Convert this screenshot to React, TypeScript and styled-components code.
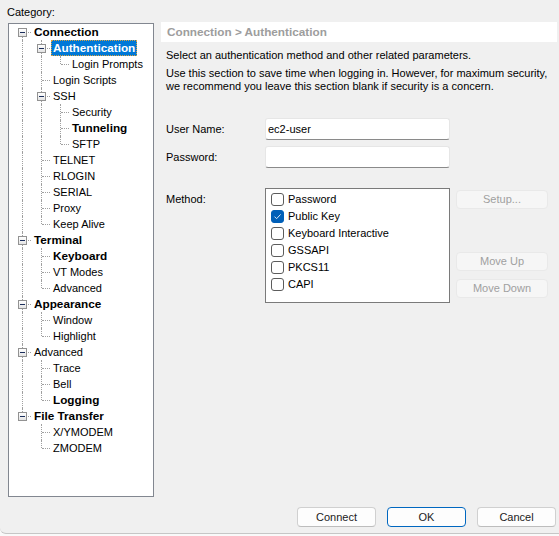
import * as React from "react";
import styled, { createGlobalStyle, css } from "styled-components";

const GlobalStyle = createGlobalStyle`
  html, body {
    margin: 0;
    background: #f9f9f9;
  }
  body {
    font-family: "Liberation Sans", Arial, sans-serif;
    font-size: 11px;
    color: #000;
  }
`;

const Window = styled.div`
  width: 559px;
  height: 534px;
  box-sizing: border-box;
  background: #f0f0f0;
  border-bottom: 1px solid #c6c6c6;
  border-bottom-left-radius: 6px;
  display: flex;
  flex-direction: column;
`;

const Body = styled.div`
  display: flex;
  padding-top: 5px;
`;

const LeftColumn = styled.div`
  margin-left: 7px;
  width: 147px;
  display: flex;
  flex-direction: column;
`;

const Caption = styled.div`
  height: 14px;
  line-height: 14px;
`;

const TreeBox = styled.div`
  margin: 4px 0 0 1px;
  width: 146px;
  height: 474px;
  box-sizing: border-box;
  border: 1px solid #828790;
  background: #fff;
  padding-left: 3px;
`;

const TreeRow = styled.div`
  display: flex;
  height: 16px;
`;

const dots = "1px dotted #a0a0a0";

const Guide = styled.div<{ $up?: boolean; $down?: boolean; $across?: boolean }>`
  position: relative;
  width: 19px;
  flex: none;
  &::before {
    content: "";
    position: absolute;
    left: 10px;
    top: ${p => (p.$up ? "0" : "8px")};
    bottom: ${p => (p.$down ? "0" : "8px")};
    border-left: ${p => (p.$up || p.$down ? dots : "none")};
  }
  &::after {
    content: "";
    position: absolute;
    left: 11px;
    right: 0;
    top: 8px;
    border-top: ${p => (p.$across ? dots : "none")};
  }
`;

const Expander = styled.span`
  position: absolute;
  z-index: 1;
  left: 6px;
  top: 4px;
  width: 9px;
  height: 9px;
  box-sizing: border-box;
  border: 1px solid #929292;
  background: linear-gradient(#ffffff, #e4e4e4);
  &::after {
    content: "";
    position: absolute;
    left: 1px;
    top: 3px;
    width: 5px;
    height: 1px;
    background: #1c2f5c;
  }
`;

const NodeLabel = styled.span<{ $bold?: boolean; $selected?: boolean }>`
  margin-left: 1px;
  padding: 0 2px;
  line-height: 16px;
  white-space: nowrap;
  font-size: ${p => (p.$bold ? "11.75px" : "11px")};
  font-weight: ${p => (p.$bold ? "bold" : "normal")};
  ${p =>
    p.$selected &&
    css`
      background: #0078d7;
      color: #fff;
      outline: 1px dotted #d9a441;
      outline-offset: -1px;
    `}
`;

const RightColumn = styled.div`
  margin: 17px 0 0 7px;
  width: 396px;
  display: flex;
  flex-direction: column;
`;

const PageTitle = styled.div`
  height: 20px;
  line-height: 20px;
  background: #fff;
  padding-left: 6px;
  color: #9d9d9d;
  font-weight: bold;
  font-size: 11.75px;
`;

const Intro = styled.p<{ $top: number }>`
  margin: ${p => p.$top}px 0 0 5px;
  line-height: 13px;
`;

const FieldRow = styled.div<{ $top: number }>`
  display: grid;
  grid-template-columns: 99px 185px 98px;
  align-items: center;
  margin: ${p => p.$top}px 0 0 5px;
`;

const FieldLabel = styled.label<{ $alignTop?: boolean }>`
  line-height: 13px;
  ${p =>
    p.$alignTop &&
    css`
      align-self: start;
      padding-top: 5px;
    `}
`;

const TextBox = styled.div`
  height: 22px;
  box-sizing: border-box;
  background: #fff;
  border: 1px solid #e6e6e6;
  border-bottom-color: #8a8a8a;
  border-radius: 3px;
  padding: 0 2px;
  line-height: 20px;
`;

const MethodList = styled.div`
  align-self: start;
  height: 115px;
  box-sizing: border-box;
  background: #fff;
  border: 1px solid #7a7a7a;
  padding: 2px 0 0 5px;
`;

const MethodRow = styled.div`
  display: flex;
  align-items: center;
  gap: 4px;
  height: 17px;
  line-height: 13px;
`;

const Box = styled.span<{ $checked?: boolean }>`
  width: 13px;
  height: 13px;
  box-sizing: border-box;
  border-radius: 3px;
  border: 1px solid ${p => (p.$checked ? "#005fb8" : "#5c5c5c")};
  background: ${p => (p.$checked ? "#005fb8" : "#fff")};
  display: flex;
  align-items: center;
  justify-content: center;
`;

const SideButtons = styled.div`
  align-self: start;
  padding: 2px 0 0 6px;
  display: flex;
  flex-direction: column;
`;

const GhostButton = styled.div<{ $top?: number }>`
  margin-top: ${p => p.$top ?? 0}px;
  height: 19px;
  box-sizing: border-box;
  border: 1px solid #e9e9e9;
  border-radius: 4px;
  background: #f6f6f6;
  color: #a0a0a0;
  text-align: center;
  line-height: 17px;
`;

const Footer = styled.div`
  margin-top: auto;
  display: flex;
  justify-content: flex-end;
  gap: 11px;
  padding: 0 3px 6px 0;
`;

const DialogButton = styled.button<{ $default?: boolean }>`
  width: 79px;
  height: 20px;
  padding: 0;
  font: inherit;
  color: #1b1b1b;
  background: #fdfdfd;
  border: 1px solid ${p => (p.$default ? "#0067c0" : "#d0d0d0")};
  border-bottom-color: ${p => (p.$default ? "#0067c0" : "#bdbdbd")};
  border-radius: 4px;
`;

type Node = {
  name: string;
  bold?: boolean;
  selected?: boolean;
  children?: Node[];
};

const tree: Node[] = [
  {
    name: "Connection",
    bold: true,
    children: [
      { name: "Authentication", bold: true, selected: true, children: [{ name: "Login Prompts" }] },
      { name: "Login Scripts" },
      {
        name: "SSH",
        children: [{ name: "Security" }, { name: "Tunneling", bold: true }, { name: "SFTP" }],
      },
      { name: "TELNET" },
      { name: "RLOGIN" },
      { name: "SERIAL" },
      { name: "Proxy" },
      { name: "Keep Alive" },
    ],
  },
  {
    name: "Terminal",
    bold: true,
    children: [{ name: "Keyboard", bold: true }, { name: "VT Modes" }, { name: "Advanced" }],
  },
  { name: "Appearance", bold: true, children: [{ name: "Window" }, { name: "Highlight" }] },
  {
    name: "Advanced",
    children: [{ name: "Trace" }, { name: "Bell" }, { name: "Logging", bold: true }],
  },
  { name: "File Transfer", bold: true, children: [{ name: "X/YMODEM" }, { name: "ZMODEM" }] },
];

type FlatRow = { node: Node; rails: boolean[]; first: boolean; last: boolean };

const flatten = (nodes: Node[], rails: boolean[], out: FlatRow[]) => {
  nodes.forEach((node, i) => {
    const last = i === nodes.length - 1;
    out.push({ node, rails, first: rails.length === 0 && i === 0, last });
    if (node.children) flatten(node.children, [...rails, !last], out);
  });
  return out;
};

const rows = flatten(tree, [], []);

const methods = [
  { name: "Password", checked: false },
  { name: "Public Key", checked: true },
  { name: "Keyboard Interactive", checked: false },
  { name: "GSSAPI", checked: false },
  { name: "PKCS11", checked: false },
  { name: "CAPI", checked: false },
];

const CheckMark = () => (
  <svg width="9" height="9" viewBox="0 0 9 9">
    <path d="M1.5 4.6 L3.6 6.7 L7.6 2.4" fill="none" stroke="#dbe8f7" strokeWidth="1" />
  </svg>
);

const App: React.FC = () => {
  return (
    <>
      <GlobalStyle />
      <Window>
        <Body>
          <LeftColumn>
            <Caption>Category:</Caption>
            <TreeBox>
              {rows.map(({ node, rails, first, last }, i) => (
                <TreeRow key={i}>
                  {rails.map((on, k) => (
                    <Guide key={k} $up={on} $down={on} />
                  ))}
                  <Guide $up={!first} $down={!last} $across>
                    {node.children && <Expander />}
                  </Guide>
                  <NodeLabel $bold={node.bold} $selected={node.selected}>
                    {node.name}
                  </NodeLabel>
                </TreeRow>
              ))}
            </TreeBox>
          </LeftColumn>

          <RightColumn>
            <PageTitle>Connection &gt; Authentication</PageTitle>
            <Intro $top={7}>Select an authentication method and other related parameters.</Intro>
            <Intro $top={5}>
              Use this section to save time when logging in. However, for maximum security,
              <br />
              we recommend you leave this section blank if security is a concern.
            </Intro>

            <FieldRow $top={25}>
              <FieldLabel>User Name:</FieldLabel>
              <TextBox>ec2-user</TextBox>
            </FieldRow>
            <FieldRow $top={6}>
              <FieldLabel>Password:</FieldLabel>
              <TextBox />
            </FieldRow>
            <FieldRow $top={20}>
              <FieldLabel $alignTop>Method:</FieldLabel>
              <MethodList>
                {methods.map(m => (
                  <MethodRow key={m.name}>
                    <Box $checked={m.checked}>{m.checked && <CheckMark />}</Box>
                    {m.name}
                  </MethodRow>
                ))}
              </MethodList>
              <SideButtons>
                <GhostButton>Setup...</GhostButton>
                <GhostButton $top={43}>Move Up</GhostButton>
                <GhostButton $top={8}>Move Down</GhostButton>
              </SideButtons>
            </FieldRow>
          </RightColumn>
        </Body>

        <Footer>
          <DialogButton>Connect</DialogButton>
          <DialogButton $default>OK</DialogButton>
          <DialogButton>Cancel</DialogButton>
        </Footer>
      </Window>
    </>
  );
};

export default App;
